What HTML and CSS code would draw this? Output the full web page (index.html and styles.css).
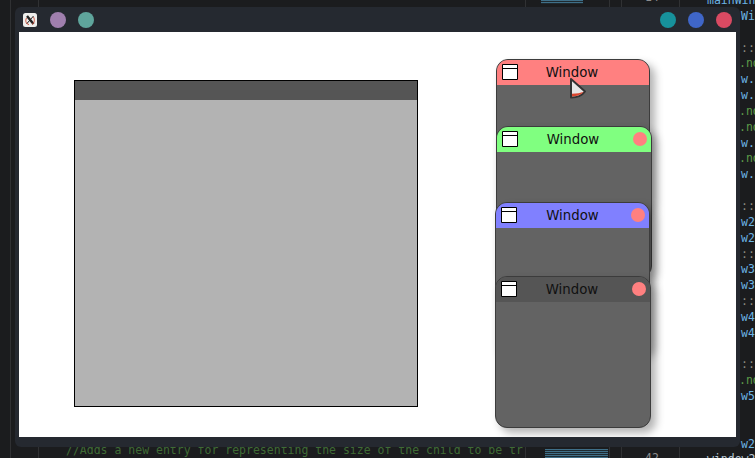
FILE: index.html
```html
<!DOCTYPE html>
<html>
<head>
    <title>Windows</title>
    <link rel="stylesheet" href="styles.css">
</head>
<body>
    <!-- editor behind the app window -->
    <div class="editor">
        <i class="rule rule-a"></i>
        <i class="rule rule-b"></i>
        <i class="rule rule-c"></i>
        <i class="rule rule-d"></i>
        <i class="rule rule-e"></i>
        <i class="rule rule-f"></i>
        <div class="minimap minimap-top"></div>
        <div class="minimap minimap-bottom"></div>
        <span class="line-no line-no-top">14</span>
        <span class="line-no line-no-bottom">42</span>
        <span class="comment-line">//Adds a new entry for representing the size of the child to be tr</span>
        <pre class="code"><span class="blue">mainWindow</span>
<span class="blue tail">Window</span>

<span class="dots tail">::</span>
<span class="green tail">.nd</span>
<span class="blue tail">w.</span>
<span class="blue tail">w.</span>
<span class="green tail">.nd</span>
<span class="green tail">.nd</span>
<span class="blue tail">w.</span>
<span class="green tail">.nd</span>
<span class="blue tail">w.</span>

<span class="dots tail">::</span>
<span class="blue tail">w2</span>
<span class="blue tail">w2</span>
<span class="dots tail">::</span>
<span class="blue tail">w3</span>
<span class="blue tail">w3</span>
<span class="dots tail">::</span>
<span class="blue tail">w4</span>
<span class="blue tail">w4</span>

<span class="dots tail">::</span>
<span class="green tail">.nd</span>
<span class="blue tail">w5</span>


<span class="blue tail">w2</span>
<span class="pale">window2</span></pre>
    </div>

    <div class="app">
        <div class="titlebar">
            <div class="controls">
                <svg class="x-logo" width="14" height="14" viewBox="0 0 14 14">
                    <rect width="14" height="14" rx="2.5" fill="#eeeeec"/>
                    <path d="M4 3 L10.5 11" stroke="#222" stroke-width="2.4" fill="none"/>
                    <path d="M10.5 3 L3.5 11" stroke="#222" stroke-width="1" fill="none"/>
                    <path d="M3.5 5 C2 8 3 11 6 11.5 M10.5 4 C12 7 11.5 10 9 11.5" stroke="#d0533f" stroke-width="1" fill="none"/>
                </svg>
                <span class="dot dot-purple"></span>
                <span class="dot dot-green"></span>
            </div>
            <div class="controls">
                <span class="dot dot-teal"></span>
                <span class="dot dot-blue"></span>
                <span class="dot dot-red"></span>
            </div>
        </div>
        <div class="canvas">
            <div class="panel">
                <div class="panel-head"></div>
            </div>

            <div class="win win-1">
                <div class="win-head head-red">
                    <svg class="win-icon" width="16" height="16" viewBox="0 0 16 16"><path d="M.5.5h15v15H.5zM.5 4.5h15" fill="#fff" stroke="#000"/></svg>
                    <span class="win-title">Window</span>
                </div>
            </div>
            <div class="win win-2">
                <div class="win-head head-green">
                    <svg class="win-icon" width="16" height="16" viewBox="0 0 16 16"><path d="M.5.5h15v15H.5zM.5 4.5h15" fill="#fff" stroke="#000"/></svg>
                    <span class="win-title">Window</span>
                    <span class="win-close"></span>
                </div>
            </div>
            <div class="win win-3">
                <div class="win-head head-blue">
                    <svg class="win-icon" width="16" height="16" viewBox="0 0 16 16"><path d="M.5.5h15v15H.5zM.5 4.5h15" fill="#fff" stroke="#000"/></svg>
                    <span class="win-title">Window</span>
                    <span class="win-close"></span>
                </div>
            </div>
            <div class="win win-4">
                <div class="win-head head-dark">
                    <svg class="win-icon" width="16" height="16" viewBox="0 0 16 16"><path d="M.5.5h15v15H.5zM.5 4.5h15" fill="#fff" stroke="#000"/></svg>
                    <span class="win-title">Window</span>
                    <span class="win-close"></span>
                </div>
            </div>

            <svg class="cursor" width="20" height="24" viewBox="0 0 20 24">
                <path d="M2 2 L16 14.5 C13.5 18 8 20.5 2 20.5 Z" fill="#e6e6e6" stroke="#333" stroke-width="2" stroke-linejoin="round"/>
                <path d="M3 16.8 C8 16.8 11.5 16 14.6 14.8 C12.5 17.5 8 19.5 3 19.5 Z" fill="#d9452e"/>
            </svg>
        </div>
    </div>
</body>
</html>
```

FILE: styles.css
```css
body {
    margin: 0;
    width: 755px;
    height: 458px;
    overflow: hidden;
    background-color: #1b1c1e;
    font-family: "DejaVu Sans", sans-serif;
}

/* editor in the background */
.editor {
    position: absolute;
    inset: 0;
    overflow: hidden;
}

.rule {
    position: absolute;
    top: 0;
    bottom: 0;
    width: 1px;
    background-color: #303133;
}

.rule-a { left: 10px; }
.rule-b { left: 38px; }
.rule-c { left: 525px; }
.rule-d { left: 609px; }
.rule-e { left: 621px; }
.rule-f { left: 679px; }

.minimap {
    position: absolute;
    background: repeating-linear-gradient(180deg, #3f6f88 0 1px, #1f2a30 1px 2px);
}

.minimap-top { left: 541px; top: 0; width: 42px; height: 4px; }
.minimap-bottom { left: 545px; top: 449px; width: 63px; height: 9px; }

.line-no {
    position: absolute;
    left: 645px;
    font: 11.5px "DejaVu Sans Mono", monospace;
    color: #8a8c8e;
}

.line-no-top { top: -10px; }
.line-no-bottom { top: 451px; }

.comment-line {
    position: absolute;
    left: 66px;
    top: 443px;
    font: 11.5px "DejaVu Sans Mono", monospace;
    color: #3f6b35;
    white-space: pre;
}

.code {
    position: absolute;
    left: 707px;
    top: -7px;
    margin: 0;
    font: 11.5px/15.85px "DejaVu Sans Mono", monospace;
}

.tail { margin-left: 34px; }
.green.tail { margin-left: 32px; }

.blue { color: #6cb4e4; }
.green { color: #5c9a48; }
.dots { color: #8a8c80; }
.pale { color: #b8c8d4; }

/* app window */
.app {
    position: absolute;
    left: 15px;
    top: 7px;
    width: 725px;
    height: 440px;
    display: flex;
    flex-direction: column;
    background-color: #252930;
    border-radius: 6px;
}

.titlebar {
    height: 25px;
    display: flex;
    justify-content: space-between;
    align-items: center;
    padding: 1px 8px 0 8px;
    box-sizing: border-box;
}

.controls {
    display: flex;
    align-items: center;
    gap: 12px;
}

.x-logo {
    margin-right: 1px;
}

.dot {
    width: 16px;
    height: 16px;
    border-radius: 50%;
}

.dot-purple { background-color: #a07fae; }
.dot-green { background-color: #5fa59c; }
.dot-teal { background-color: #17929c; }
.dot-blue { background-color: #3f66c8; }
.dot-red { background-color: #d94a62; }

.canvas {
    position: relative;
    margin-left: 4px;
    width: 717px;
    height: 405px;
    background-color: #fff;
    overflow: hidden;
}

.panel {
    position: absolute;
    left: 55px;
    top: 48px;
    width: 342px;
    height: 325px;
    border: 1px solid #000;
    background-color: #b3b3b3;
}

.panel-head {
    height: 19px;
    background-color: #555;
}

/* small windows on the canvas */
.win {
    position: absolute;
    height: 150px;
    border: 1px solid #3c3c3c;
    border-radius: 12px;
    background-color: #636363;
    box-shadow: 5px 5px 8px rgba(0, 0, 0, 0.3);
    overflow: hidden;
}

.win-1 { left: 477px; top: 27px; width: 152px; }
.win-2 { left: 477px; top: 94px; width: 154px; }
.win-3 { left: 476px; top: 170px; width: 153px; }
.win-4 { left: 476px; top: 244px; width: 154px; }

.win-head {
    position: relative;
    height: 25px;
    display: flex;
    align-items: center;
    justify-content: center;
}

.win-1 .win-head,
.win-2 .win-head,
.win-4 .win-head {
    padding-right: 2px;
}

.head-red { background-color: #ff8080; }
.head-green { background-color: #80ff80; }
.head-blue { background-color: #8080ff; }
.head-dark { background-color: #555; }

.win-icon {
    position: absolute;
    left: 5px;
    top: 4px;
}

.win-title {
    font-size: 13.33px;
    color: #111;
}

.win-close {
    position: absolute;
    right: 4px;
    top: 5px;
    width: 14px;
    height: 14px;
    border-radius: 50%;
    background-color: #ff8080;
}

.cursor {
    position: absolute;
    left: 550px;
    top: 45px;
}
```
